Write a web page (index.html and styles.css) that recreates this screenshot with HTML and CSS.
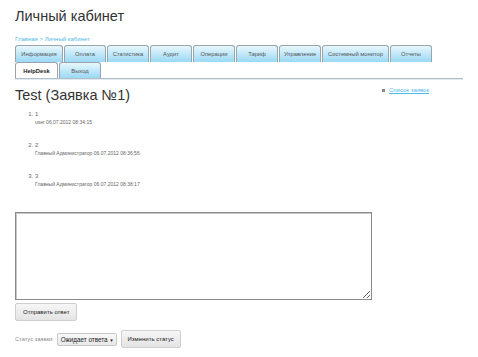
FILE: index.html
```html
<!DOCTYPE html>
<html lang="ru">
<head>
  <meta charset="UTF-8">
  <title>Личный кабинет</title>
  <link rel="stylesheet" href="styles.css">
</head>
<body>
  <h1 class="site-title">Личный кабинет</h1>

  <div class="crumbs"><a href="#">Главная</a> &gt; <a href="#">Личный кабинет</a></div>

  <div class="tabs">
    <div class="tab-row">
      <a class="tab tab-info" href="#">Информация</a>
      <a class="tab" href="#">Оплата</a>
      <a class="tab" href="#">Статистика</a>
      <a class="tab" href="#">Аудит</a>
      <a class="tab" href="#">Операции</a>
      <a class="tab" href="#">Тариф</a>
      <a class="tab" href="#">Управление</a>
      <a class="tab tab-monitor" href="#">Системный монитор</a>
      <a class="tab" href="#">Отчеты</a>
    </div>
    <div class="tab-row">
      <a class="tab active" href="#">HelpDesk</a>
      <a class="tab" href="#">Выход</a>
    </div>
  </div>

  <div class="content">
    <div class="main">
      <h2 class="ticket-title">Test (Заявка №1)</h2>
      <ol class="messages">
        <li>
          <div class="msg-text">1</div>
          <div class="msg-meta">user 06.07.2012 08:34:15</div>
        </li>
        <li>
          <div class="msg-text">2</div>
          <div class="msg-meta">Главный Администратор 06.07.2012 08:36:56</div>
        </li>
        <li>
          <div class="msg-text">3</div>
          <div class="msg-meta">Главный Администратор 06.07.2012 08:38:17</div>
        </li>
      </ol>
    </div>
    <ul class="side">
      <li><a href="#">Список заявок</a></li>
    </ul>
  </div>

  <form class="reply">
    <textarea class="reply-text"></textarea>
    <div><button type="button" class="btn">Отправить ответ</button></div>
  </form>

  <div class="status">
    <span class="status-label">Статус заявки:</span>
    <span class="select">Ожидает ответа <span class="arrow">▼</span></span>
    <button type="button" class="btn">Изменить статус</button>
  </div>
</body>
</html>
```

FILE: styles.css
```css
body {
  margin: 0;
  padding: 7px 15px 0 15px;
  font-family: "Liberation Sans", Arial, sans-serif;
  color: #333;
  background: #fff;
}
a {
  color: #4fb9e8;
}
.site-title {
  margin: 0;
  font-size: 14.5px;
  font-weight: normal;
  line-height: 18px;
}
.crumbs {
  margin-top: 10px;
  font-size: 6px;
  line-height: 8px;
  color: #4fb9e8;
}
.crumbs a {
  text-decoration: none;
}
.tabs {
  margin-top: 2px;
  width: 448px;
  border-bottom: 1px solid #b4bcc4;
  box-shadow: 0 1px 0 #dfeaf2;
}
.tab-row {
  display: flex;
  gap: 1px;
}
.tab {
  box-sizing: border-box;
  width: 42px;
  height: 17px;
  padding: 0;
  border: 1px solid #9aa4ab;
  border-bottom: none;
  border-radius: 3px 3px 0 0;
  background: linear-gradient(#e8f7fd, #9ad9f6);
  color: #555;
  font-size: 5.8px;
  line-height: 16px;
  text-align: center;
  text-decoration: none;
  white-space: nowrap;
}
.tab-info {
  width: 48px;
}
.tab-monitor {
  width: 67px;
}
.tab-row + .tab-row .tab {
  height: 16px;
}
.tab.active {
  width: 43px;
  background: #fff;
  color: #222;
  font-weight: bold;
}
.content {
  display: flex;
  justify-content: space-between;
  width: 448px;
}
.ticket-title {
  margin: 7px 0 0 0;
  font-size: 14.5px;
  font-weight: normal;
  line-height: 18px;
}
.messages {
  margin: 6px 0 0 0;
  padding-left: 20px;
  font-size: 6px;
  color: #666;
}
.messages li {
  height: 31px;
}
.msg-text {
  line-height: 8px;
}
.msg-meta {
  font-size: 5px;
  line-height: 8px;
}
.side {
  margin: 8px 0 0 0;
  padding: 0;
  width: 81px;
  list-style: none;
  font-size: 6px;
}
.side li::before {
  content: "";
  display: inline-block;
  width: 3px;
  height: 3px;
  background: #888;
  margin-right: 4px;
  vertical-align: middle;
}
.reply {
  margin-top: 9px;
}
.reply-text {
  display: block;
  box-sizing: border-box;
  width: 357px;
  height: 88px;
  margin: 0;
  border: 1px solid #8a8a8a;
  box-shadow: inset 1px 1px 0 #c8c8c8;
  resize: both;
}
.btn {
  box-sizing: border-box;
  height: 18px;
  padding: 0 7px;
  border: 1px solid #cfcfcf;
  border-radius: 2px;
  background: linear-gradient(#f6f6f6, #e4e4e4);
  color: #222;
  font-family: "Liberation Sans", Arial, sans-serif;
  font-size: 6px;
  white-space: nowrap;
}
.reply .btn {
  margin-top: 3px;
  min-width: 60px;
}
.status {
  display: flex;
  align-items: center;
  margin-top: 9px;
  font-size: 5.7px;
}
.status-label {
  color: #888;
  margin-right: 3px;
}
.select {
  box-sizing: border-box;
  width: 60px;
  height: 13px;
  padding: 0 3px;
  border: 1px solid #c8c8c8;
  border-radius: 2px;
  background: linear-gradient(#f8f8f8, #e8e8e8);
  color: #222;
  font-size: 6.3px;
  line-height: 11px;
  white-space: nowrap;
}
.arrow {
  font-size: 4.5px;
}
.status .btn {
  margin-left: 4px;
  width: 60px;
  padding: 0;
}
```
